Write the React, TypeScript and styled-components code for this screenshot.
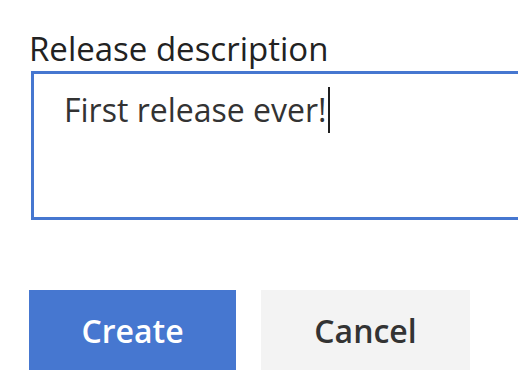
import styled, { createGlobalStyle } from "styled-components";

const Global = createGlobalStyle`
  html, body { margin: 0; background: #ffffff; }
  body { font-family: "Open Sans", "Noto Sans", sans-serif; overflow: hidden; }
`;

const Page = styled.div`
  width: 518px;
  height: 380px;
  padding: 27px 0 0 29px;
  box-sizing: border-box;
  display: flex;
  flex-direction: column;
  overflow: hidden;
`;

const Field = styled.div`
  display: flex;
  flex-direction: column;
`;

const Label = styled.label`
  font-size: 33px;
  line-height: 44px;
  color: #222222;
  white-space: nowrap;
`;

// the box runs on past the right edge of the window, its right border is cut off
const TextBox = styled.div`
  margin-left: 2px;
  margin-right: -6px;
  height: 149px;
  box-sizing: border-box;
  border: 3px solid #4677d0;
  padding: 13px 0 0 30px;
  font-size: 32px;
  line-height: 46px;
  color: #333333;
  white-space: nowrap;
  overflow: hidden;
`;

const Caret = styled.span`
  display: inline-block;
  width: 2px;
  height: 46px;
  margin-left: 1px;
  background: #1f1f1f;
  vertical-align: top;
`;

const Actions = styled.div`
  display: flex;
  gap: 25px;
  margin-top: 70px;
`;

const Button = styled.button<{ $primary?: boolean; $width: number }>`
  width: ${({ $width }) => $width}px;
  height: 80px;
  border: none;
  padding: 0;
  display: flex;
  align-items: center;
  justify-content: center;
  font-family: "Open Sans", "Noto Sans", sans-serif;
  font-size: 32px;
  font-weight: 600;
  background: ${({ $primary }) => ($primary ? "#4677d0" : "#f3f3f3")};
  color: ${({ $primary }) => ($primary ? "#ffffff" : "#333333")};
`;

export default function App() {
  return (
    <>
      <Global />
      <Page>
        <Field>
          <Label>Release description</Label>
          <TextBox>
            First release ever!
            <Caret />
          </TextBox>
        </Field>
        <Actions>
          <Button $primary $width={207}>
            Create
          </Button>
          <Button $width={209}>Cancel</Button>
        </Actions>
      </Page>
    </>
  );
}
